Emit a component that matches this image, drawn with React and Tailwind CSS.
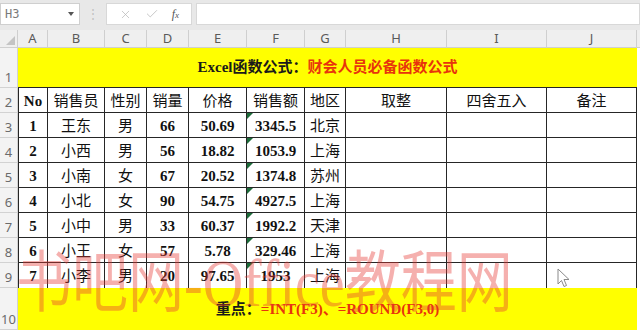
import { X, Check } from "lucide-react";

const COLS = ["A", "B", "C", "D", "E", "F", "G", "H", "I", "J"];
const HEAD = ["No", "销售员", "性别", "销量", "价格", "销售额", "地区", "取整", "四舍五入", "备注"];
const ROWS = [
  [1, "王东", "男", 66, "50.69", "3345.5", "北京"],
  [2, "小西", "男", 56, "18.82", "1053.9", "上海"],
  [3, "小南", "女", 67, "20.52", "1374.8", "苏州"],
  [4, "小北", "女", 90, "54.75", "4927.5", "上海"],
  [5, "小中", "男", 33, "60.37", "1992.2", "天津"],
  [6, "小王", "女", 57, "5.78", "329.46", "上海"],
  [7, "小李", "男", 20, "97.65", "1953", "上海"],
];

const serif = "font-['Liberation_Serif','Noto_Sans_CJK_SC',serif]";

function RowNum({ n }) {
  return (
    <div className="flex items-end justify-center border-r border-b border-[#d2d2d2] bg-[#f3f3f3] text-[13px] leading-none pb-[3px] text-[#6b6b6b] font-['Noto_Sans',sans-serif]">
      {n}
    </div>
  );
}

function Cell({ children, first, last, bold, flag }) {
  return (
    <div
      className={`relative flex items-center justify-center pt-[2px] border-r border-[#262626] text-[15px] text-[#111] ${serif} ${
        last ? "" : "border-b"
      } ${first ? "border-l" : ""} ${bold ? "font-bold" : "font-normal"}`}
    >
      {flag && (
        <span className="absolute left-0 top-0 w-0 h-0 border-t-[6px] border-t-[#1d6b3a] border-r-[6px] border-r-transparent" />
      )}
      {children}
    </div>
  );
}

export default function App() {
  return (
    <div className="relative w-[640px] h-[330px] overflow-hidden bg-white">
      {/* formula bar */}
      <div className="h-[30px] bg-[#e8e8e8] flex items-start pt-[3px]">
        <div className="w-[80px] h-[22px] bg-white border border-[#cfcfcf] flex items-center justify-between pl-[4px] pr-[5px]">
          <span className="text-[12px] text-[#7a7a7a] font-['DejaVu_Sans_Mono',monospace]">H3</span>
          <span className="w-0 h-0 border-l-[3px] border-l-transparent border-r-[3px] border-r-transparent border-t-[4px] border-t-[#555]" />
        </div>
        <div className="w-[26px] h-[22px] flex items-center justify-center text-[#c0c0c0] text-[12px] leading-none">⋮</div>
        <div className="w-[86px] h-[22px] bg-white border border-[#d8d8d8] flex items-center justify-between px-[12px]">
          <X size={13} strokeWidth={1.3} color="#b5b5b5" />
          <Check size={14} strokeWidth={1.3} color="#b5b5b5" />
          <span className="italic text-[12px] text-[#555] font-['Liberation_Serif',serif] leading-none">
            f<span className="text-[9px]">x</span>
          </span>
        </div>
        <div className="ml-[4px] flex-1 h-[22px] bg-white border border-[#d8d8d8]" />
      </div>

      {/* sheet */}
      <div className="grid grid-cols-[18px_30px_57px_42px_42px_58px_58px_41px_101px_100px_90px_3px] grid-rows-[18px_40px_repeat(8,25px)_42px]">
        <div className="relative border-r border-b border-[#cfcfcf] bg-[#efefef]">
          <span className="absolute right-[2px] bottom-[2px] w-0 h-0 border-l-[9px] border-l-transparent border-b-[9px] border-b-[#c4c4c4]" />
        </div>
        {COLS.map((c) => (
          <div
            key={c}
            className="flex items-center justify-center border-r border-b border-[#cfcfcf] bg-[#efefef] text-[13px] text-[#5a5a5a] font-['Noto_Sans',sans-serif]"
          >
            {c}
          </div>
        ))}
        <div className="bg-[#efefef] border-b border-[#cfcfcf]" />

        {/* row 1 */}
        <RowNum n={1} />
        <div className={`col-span-10 bg-[#ffff00] border-b border-[#262626] flex items-center justify-center text-[15px] font-bold ${serif}`}>
          <span className="text-[#1a1a1a]">Excel函数公式：</span>
          <span className="text-[#e8340c]">财会人员必备函数公式</span>
        </div>
        <div className="bg-white" />

        {/* row 2 */}
        <RowNum n={2} />
        {HEAD.map((h, i) => (
          <Cell key={h} first={i === 0} bold={i === 0}>
            {h}
          </Cell>
        ))}
        <div className="bg-white" />

        {ROWS.map((r, ri) => {
          const last = ri === ROWS.length - 1;
          return [
            <RowNum key={`n${ri}`} n={ri + 3} />,
            ...r.map((v, ci) => (
              <Cell
                key={`${ri}-${ci}`}
                first={ci === 0}
                last={last}
                bold={typeof v === "number" || ci === 4 || ci === 5}
                flag={ci === 5}
              >
                {v}
              </Cell>
            )),
            <Cell key={`${ri}-h`} last={last} />,
            <Cell key={`${ri}-i`} last={last} />,
            <Cell key={`${ri}-j`} last={last} />,
            <div key={`${ri}-m`} className="bg-white" />,
          ];
        })}

        {/* row 10 */}
        <RowNum n={10} />
        <div className={`col-span-10 bg-[#ffff00] flex items-center justify-center text-[15px] font-bold ${serif}`}>
          <span className="text-[#1a1a1a]">重点：</span>
          <span className="text-[#e8340c]">=INT(F3)、=ROUND(F3,0)</span>
        </div>
        <div className="bg-white" />
      </div>

      {/* watermark */}
      <div className="absolute left-[16px] top-[250px] origin-top scale-y-[1.2] whitespace-nowrap leading-none text-[56px] font-normal text-[#e53935]/40 font-['Liberation_Serif','Noto_Sans_CJK_SC',serif] pointer-events-none">
        书吧网-Office教程网
      </div>

      {/* mouse pointer */}
      <svg className="absolute left-[557px] top-[268px]" width="14" height="20" viewBox="0 0 14 20">
        <path d="M1 1 L1 16 L4.5 12.5 L7 18.5 L9.5 17.5 L7 11.5 L12 11.5 Z" fill="white" fillOpacity="0.85" stroke="#8a8a8a" strokeWidth="1" />
      </svg>
    </div>
  );
}
